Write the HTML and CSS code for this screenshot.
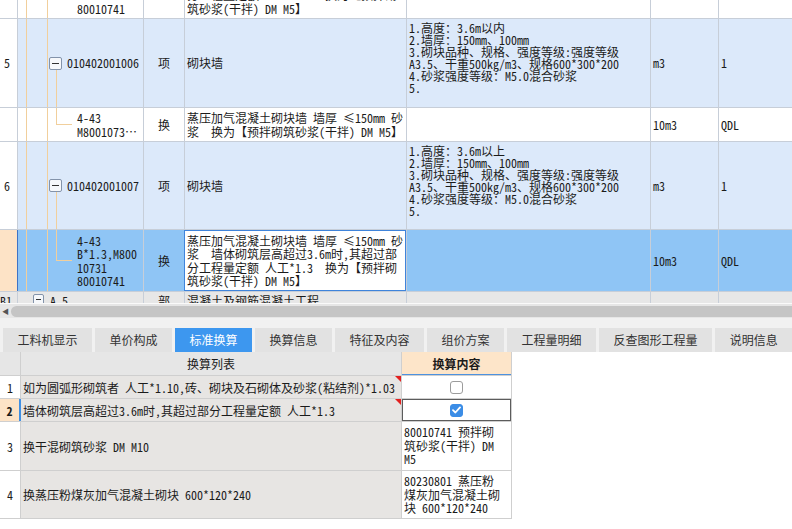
FILE: index.html
```html
<!DOCTYPE html>
<html lang="zh-CN">
<head>
<meta charset="utf-8">
<title>标准换算</title>
<link rel="stylesheet" href="styles.css">
</head>
<body>
<div class="upper">
  <div class="rows">
    <div class="row h61">
      <div class="c c0"></div>
      <div class="c c1 child"><div class="lines">4-43<br>B*1.3,M800<br>10731<br>80010741</div></div>
      <div class="c c2">换</div>
      <div class="c c3"><div class="lines">蒸压加气混凝土砌块墙 墙厚 ≤150mm 砂<br>浆&nbsp;&nbsp;墙体砌筑层高超过3.6m时，其超过部<br>分工程量定额 人工*1.3&nbsp;&nbsp;换为【预拌砌<br>筑砂浆(干拌) DM M5】</div></div>
      <div class="c c4"></div>
      <div class="c c5"></div>
      <div class="c c6"></div>
    </div>
    <div class="row h89 blue">
      <div class="c c0">5</div>
      <div class="c c1 parent"><span class="box"></span>010402001006</div>
      <div class="c c2">项</div>
      <div class="c c3">砌块墙</div>
      <div class="c c4"><div class="feat">1.高度：3.6m以内<br>2.墙厚：150mm、100mm<br>3.砌块品种、规格、强度等级:强度等级<br>A3.5、干重500kg/m3、规格600*300*200<br>4.砂浆强度等级：M5.0混合砂浆<br>5.</div></div>
      <div class="c c5">m3</div>
      <div class="c c6">1</div>
    </div>
    <div class="row h34">
      <div class="c c0"></div>
      <div class="c c1 child"><div class="lines">4-43<br>M8001073…</div></div>
      <div class="c c2">换</div>
      <div class="c c3"><div class="lines">蒸压加气混凝土砌块墙 墙厚 ≤150mm 砂<br>浆&nbsp;&nbsp;换为【预拌砌筑砂浆(干拌) DM M5】</div></div>
      <div class="c c4"></div>
      <div class="c c5">10m3</div>
      <div class="c c6">QDL</div>
    </div>
    <div class="row h88 blue">
      <div class="c c0">6</div>
      <div class="c c1 parent"><span class="box"></span>010402001007</div>
      <div class="c c2">项</div>
      <div class="c c3">砌块墙</div>
      <div class="c c4"><div class="feat">1.高度：3.6m以上<br>2.墙厚：150mm、100mm<br>3.砌块品种、规格、强度等级:强度等级<br>A3.5、干重500kg/m3、规格600*300*200<br>4.砂浆强度等级：M5.0混合砂浆<br>5.</div></div>
      <div class="c c5">m3</div>
      <div class="c c6">1</div>
    </div>
    <div class="row h62 sel">
      <div class="c c0 peach"></div>
      <div class="c c1 child"><div class="lines">4-43<br>B*1.3,M800<br>10731<br>80010741</div></div>
      <div class="c c2">换</div>
      <div class="c c3 edit"><div class="lines">蒸压加气混凝土砌块墙 墙厚 ≤150mm 砂<br>浆&nbsp;&nbsp;墙体砌筑层高超过3.6m时，其超过部<br>分工程量定额 人工*1.3&nbsp;&nbsp;换为【预拌砌<br>筑砂浆(干拌) DM M5】</div></div>
      <div class="c c4"></div>
      <div class="c c5">10m3</div>
      <div class="c c6">QDL</div>
    </div>
    <div class="row h24 gray">
      <div class="c c0 top">B1</div>
      <div class="c c1 plain top"><span class="box"></span>A.5</div>
      <div class="c c2 top">部</div>
      <div class="c c3 top">混凝土及钢筋混凝土工程</div>
      <div class="c c4"></div>
      <div class="c c5"></div>
      <div class="c c6"></div>
    </div>
  </div>
</div>

<div class="hscroll">
  <span class="arrow">◀</span>
  <div class="thumb"></div>
</div>

<div class="tabs">
  <div class="tab">工料机显示</div>
  <div class="tab">单价构成</div>
  <div class="tab active">标准换算</div>
  <div class="tab">换算信息</div>
  <div class="tab">特征及内容</div>
  <div class="tab">组价方案</div>
  <div class="tab">工程量明细</div>
  <div class="tab">反查图形工程量</div>
  <div class="tab">说明信息</div>
</div>

<div class="lower">
  <div class="grid2">
    <div class="lr hh">
      <div class="l l0 hd"></div>
      <div class="l l1 hd center">换算列表</div>
      <div class="l l2 hd2">换算内容</div>
    </div>
    <div class="lr h23">
      <div class="l l0">1</div>
      <div class="l l1 ro">如为圆弧形砌筑者 人工*1.10,砖、砌块及石砌体及砂浆(粘结剂)*1.03<i class="tri"></i></div>
      <div class="l l2 center"><span class="cb"></span></div>
    </div>
    <div class="lr h23">
      <div class="l l0 cur">2</div>
      <div class="l l1 ro">墙体砌筑层高超过3.6m时，其超过部分工程量定额 人工*1.3<i class="tri"></i></div>
      <div class="l l2 center focus"><span class="cb on"><svg width="9" height="8" viewBox="0 0 9 8"><path d="M1 4.2 L3.4 6.5 L8 1.4" fill="none" stroke="#fff" stroke-width="1.8" stroke-linecap="round" stroke-linejoin="round"/></svg></span></div>
    </div>
    <div class="lr h49">
      <div class="l l0">3</div>
      <div class="l l1 ro">换干混砌筑砂浆 DM M10</div>
      <div class="l l2 txt">80010741　预拌砌<br>筑砂浆(干拌) DM<br>M5</div>
    </div>
    <div class="lr h48">
      <div class="l l0">4</div>
      <div class="l l1 ro">换蒸压粉煤灰加气混凝土砌块 600*120*240</div>
      <div class="l l2 txt">80230801　蒸压粉<br>煤灰加气混凝土砌<br>块 600*120*240</div>
    </div>
  </div>
</div>
</body>
</html>
```

FILE: styles.css
```css
* { box-sizing: border-box; margin: 0; padding: 0; }
html, body { width: 792px; height: 529px; overflow: hidden; background: #fff; }
body {
  font-family: "Noto Sans CJK SC", "Noto Sans", sans-serif;
  font-size: 12px;
  color: #1b1b1b;
  font-feature-settings: "hwid" 1;
  --tree: #f1cf9c;
  --line: #c7ced8;
}

/* ---------- upper grid ---------- */
.upper { height: 303px; overflow: hidden; background: #fff; }
.rows { margin-top: -42px; }
.row {
  display: grid;
  grid-template-columns: 18px 126px 41px 222px 244px 68px 73px;
  border-bottom: 1px solid var(--line);
}
.h61 { height: 61px; }
.h89 { height: 89px; }
.h34 { height: 34px; }
.h88 { height: 88px; }
.h62 { height: 62px; }
.h24 { height: 24px; }
.blue { background: #dce9fa; }
.sel { background: #8fc5f5; }
.gray { background: #e7e7e7; }

.c {
  border-right: 1px solid var(--line);
  display: flex;
  align-items: center;
  white-space: nowrap;
  overflow: hidden;
  line-height: 14px;
}
.c6 { border-right: 0; }
.top { align-items: flex-start; padding-top: 2px; }
.c0 { background: #fff; padding-left: 4px; }
.gray .c0 { background: #e7e7e7; padding-left: 0; }
.c0.peach { background: #fde3c6; border-right-color: #3f73c4; }
.c2 { justify-content: center; }
.c3 { padding-left: 2px; }
.c4 { align-items: flex-start; padding: 3px 0 0 2px; }
.feat { line-height: 12px; }
.c5, .c6 { padding-left: 2px; }
.lines { line-height: 13.5px; }

/* tree lines in code column */
.c1 {
  padding-left: 59px;
  background-repeat: no-repeat;
}
.c1.child {
  background-image:
    linear-gradient(var(--tree), var(--tree)),
    linear-gradient(var(--tree), var(--tree)),
    linear-gradient(var(--tree), var(--tree)),
    linear-gradient(var(--tree), var(--tree));
  background-size: 1px 100%, 1px 100%, 1px 50%, 16px 1px;
  background-position: 8px 0, 29px 0, 38px 0, 38px 50%;
}
.c1.parent {
  padding-left: 31px;
  background-image:
    linear-gradient(var(--tree), var(--tree)),
    linear-gradient(var(--tree), var(--tree)),
    linear-gradient(var(--tree), var(--tree));
  background-size: 1px 100%, 1px 100%, 1px calc(50% - 6px);
  background-position: 8px 0, 29px 0, 38px 100%;
}
.c1.plain { padding-left: 15px; }
.box {
  position: relative;
  display: inline-block;
  width: 13px;
  height: 13px;
  border: 1px solid #8393aa;
  border-radius: 2px;
  background: #f6f8fb;
  margin-right: 5px;
  flex: none;
}
.box::after {
  content: "";
  position: absolute;
  left: 2px;
  right: 2px;
  top: 5px;
  height: 1px;
  background: #333;
}
.plain .box { width: 11px; height: 11px; margin-right: 6px; }
.plain .box::after { top: 4px; }

.edit {
  background: #fff;
  box-shadow: inset 0 0 0 1px #3f84db;
  margin: 0 0 0 -1px;
  padding-left: 3px;
}

/* ---------- scrollbar ---------- */
.hscroll {
  height: 15px;
  background: #e6e6e6;
  border-top: 1px solid #fafafa;
  display: flex;
  align-items: center;
  padding: 0 0 0 2px;
}
.arrow { font-size: 7px; color: #555; width: 9px; line-height: 1; }
.thumb {
  flex: 1;
  height: 11px;
  background: #c5c5c5;
  border-radius: 6px 0 0 6px;
}

/* ---------- tabs ---------- */
.tabs {
  height: 34px;
  background: #f1f1f1;
  padding: 10px 0 0 3px;
  display: flex;
  gap: 3px;
  overflow: hidden;
}
.tab {
  height: 24px;
  line-height: 24px;
  padding: 0 14.5px;
  background: #e2e2e2;
  color: #333;
  white-space: nowrap;
  flex: none;
}
.tab.active { background: #3d97ef; color: #fff; }

/* ---------- lower grid ---------- */
.lower { background: #fff; height: 177px; }
.grid2 { width: 512px; }
.lr {
  display: grid;
  grid-template-columns: 21px 381px 110px;
  border-bottom: 1px solid #cfcfcf;
}
.hh { height: 24px; }
.h23 { height: 23px; }
.h49 { height: 49px; }
.h48 { height: 48px; }
.l {
  position: relative;
  border-right: 1px solid #cfcfcf;
  display: flex;
  align-items: center;
  white-space: nowrap;
}
.l0 { justify-content: center; background: #fff; }
.l0.cur { background: #fde3c6; font-weight: bold; border-right: 2px solid #3f8fe3; }
.l1 { padding-left: 2px; }
.center { justify-content: center; }
.hd { background: #e6e6e6; padding-left: 0; }
.hd2 {
  justify-content: center;
  background: #fde5c9;
  font-weight: bold;
  box-shadow: inset 0 -1px 0 #4d92e0;
}
.ro { background: #e7e5e3; }
.txt { align-items: flex-start; padding: 3px 0 0 2px; line-height: 13.5px; }
.focus { box-shadow: inset 0 0 0 1px #5c5c5c; }
.tri {
  position: absolute;
  top: 0;
  right: 0;
  width: 0;
  height: 0;
  border-top: 6px solid #e3201f;
  border-left: 6px solid transparent;
}
.cb {
  display: inline-flex;
  align-items: center;
  justify-content: center;
  width: 13px;
  height: 13px;
  border: 1px solid #9c9c9c;
  border-radius: 3px;
  background: #fff;
}
.cb.on { background: #3b8de6; border-color: #3b8de6; }
```
